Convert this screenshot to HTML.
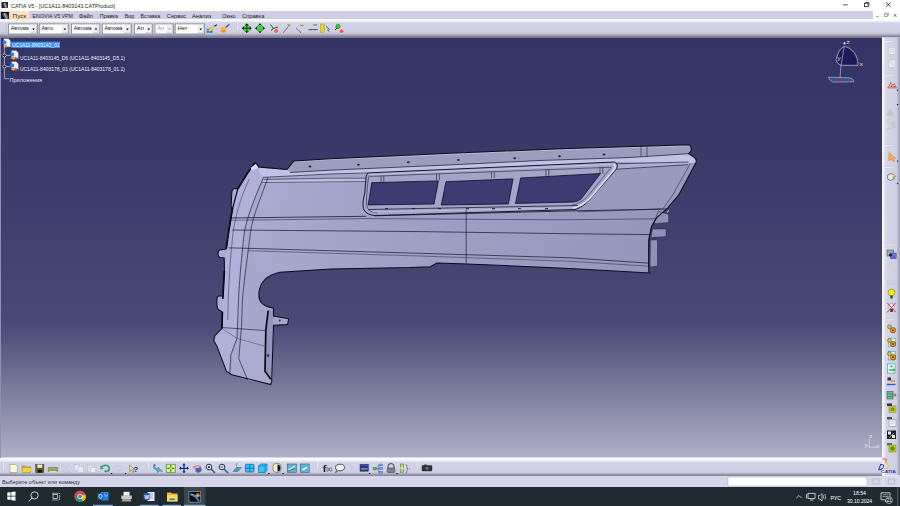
<!DOCTYPE html><html><head><meta charset="utf-8"><style>*{margin:0;padding:0}html,body{width:900px;height:506px;overflow:hidden;background:#fff}svg{display:block;font-family:"Liberation Sans",sans-serif}</style></head><body><svg width="900" height="506" viewBox="0 0 900 506"><defs><linearGradient id="vpg" x1="0" y1="0" x2="0" y2="1"><stop offset="0" stop-color="#333364"/><stop offset="0.35" stop-color="#3c3c6a"/><stop offset="0.686" stop-color="#4a4a76"/><stop offset="1" stop-color="#b0b0c8"/></linearGradient></defs><defs><linearGradient id="tbg" x1="0" y1="0" x2="0" y2="1"><stop offset="0" stop-color="#ffffff"/><stop offset="0.1" stop-color="#f4f4fa"/><stop offset="0.2" stop-color="#d2d2e8"/><stop offset="0.7" stop-color="#cfcfe4"/><stop offset="0.82" stop-color="#b8b8cc"/><stop offset="0.92" stop-color="#8a8a9a"/><stop offset="1" stop-color="#7a7a8a"/></linearGradient><linearGradient id="btg" x1="0" y1="0" x2="0" y2="1"><stop offset="0" stop-color="#ffffff"/><stop offset="0.18" stop-color="#f0f0f8"/><stop offset="0.26" stop-color="#d2d2e8"/><stop offset="0.8" stop-color="#cfcfe4"/><stop offset="0.88" stop-color="#a8a8bc"/><stop offset="1" stop-color="#80808f"/></linearGradient><linearGradient id="rtg" x1="0" y1="0" x2="1" y2="0"><stop offset="0" stop-color="#ffffff"/><stop offset="0.22" stop-color="#d6d6ea"/><stop offset="0.8" stop-color="#cfcfe4"/><stop offset="1" stop-color="#9a9aae"/></linearGradient></defs><rect x="0" y="0" width="900" height="11" fill="#ffffff" /><rect x="0" y="11" width="873" height="8.4" fill="#cecee4" /><rect x="873" y="11" width="27" height="8.4" fill="#ffffff" /><rect x="0" y="19.3" width="900" height="18.2" fill="url(#tbg)" /><rect x="0" y="37.5" width="882" height="420.5" fill="url(#vpg)" /><rect x="882" y="37.5" width="18" height="438" fill="url(#rtg)" /><rect x="0" y="457.5" width="882" height="18.5" fill="url(#btg)" /><rect x="0" y="476" width="900" height="11" fill="#d6d6ea" /><rect x="728" y="477.2" width="139" height="8.8" fill="#ffffff" /><rect x="0" y="487" width="900" height="19" fill="#1f2a31" /><g transform="translate(1.5,2.1) scale(0.8,0.725)"><rect x="0" y="0" width="8" height="8" fill="#0a0e16"/><path d="M1 3 L2.5 1.2 L5.5 8 L4 8z" fill="#2a5a90"/><path d="M2.5 1.2 L3.8 1 L6.6 7.6 L5.5 8z" fill="#c8d8d8"/><path d="M3.8 1 L5.5 1.2 L7.3 5.5 L6.6 7.6z" fill="#a06030"/></g><text x="11" y="7.6" textLength="104" lengthAdjust="spacingAndGlyphs" font-size="5.6" fill="#222" font-weight="normal" >CATIA V5 - [UC1A11-8403143.CATProduct]</text><rect x="842.8" y="4.5" width="5" height="0.8" fill="#333" /><rect x="864.5" y="3.3" width="3.6" height="3.4" fill="none" stroke="#222" stroke-width="0.8"/><path d="M865.5 3.2 V2.4 H869 V5.9 H868.2" fill="none" stroke="#222" stroke-width="0.7"/><path d="M886 2.4 L890.6 6.8 M890.6 2.4 L886 6.8" stroke="#222" stroke-width="0.8"/><g transform="translate(0.9,12) scale(1.0,0.875)"><rect x="0" y="0" width="8" height="8" fill="#0a0e16"/><path d="M1 3 L2.5 1.2 L5.5 8 L4 8z" fill="#2a5a90"/><path d="M2.5 1.2 L3.8 1 L6.6 7.6 L5.5 8z" fill="#c8d8d8"/><path d="M3.8 1 L5.5 1.2 L7.3 5.5 L6.6 7.6z" fill="#a06030"/></g><rect x="10.5" y="11" width="18.5" height="9.1" fill="#fbe3c0" /><text x="12.6" y="17.6" textLength="13.6" lengthAdjust="spacingAndGlyphs" font-size="6.2" fill="#222" font-weight="normal" >Пуск</text><text x="32.6" y="17.6" textLength="40.4" lengthAdjust="spacingAndGlyphs" font-size="6.2" fill="#222" font-weight="normal" >ENOVIA V5 VPM</text><text x="78.9" y="17.6" textLength="14" lengthAdjust="spacingAndGlyphs" font-size="6.2" fill="#222" font-weight="normal" >Файл</text><text x="99.8" y="17.6" textLength="18.2" lengthAdjust="spacingAndGlyphs" font-size="6.2" fill="#222" font-weight="normal" >Правка</text><text x="124.7" y="17.6" textLength="9.4" lengthAdjust="spacingAndGlyphs" font-size="6.2" fill="#222" font-weight="normal" >Вид</text><text x="140.6" y="17.6" textLength="19.6" lengthAdjust="spacingAndGlyphs" font-size="6.2" fill="#222" font-weight="normal" >Вставка</text><text x="166.8" y="17.6" textLength="19.4" lengthAdjust="spacingAndGlyphs" font-size="6.2" fill="#222" font-weight="normal" >Сервис</text><text x="192" y="17.6" textLength="19.2" lengthAdjust="spacingAndGlyphs" font-size="6.2" fill="#222" font-weight="normal" >Анализ</text><text x="222" y="17.6" textLength="13.6" lengthAdjust="spacingAndGlyphs" font-size="6.2" fill="#222" font-weight="normal" >Окно</text><text x="242" y="17.6" textLength="22.4" lengthAdjust="spacingAndGlyphs" font-size="6.2" fill="#222" font-weight="normal" >Справка</text><rect x="873.5" y="11" width="7.5" height="8" fill="#ffffff" /><rect x="882" y="11" width="8" height="8" fill="#ffffff" /><rect x="891" y="11" width="8.5" height="8" fill="#ffffff" /><rect x="876.2" y="16.3" width="2.2" height="0.7" fill="#555" /><rect x="884.5" y="14" width="3" height="2.6" fill="none" stroke="#666" stroke-width="0.6"/><path d="M885.3 13.9 V13 H888.5 V15.8" fill="none" stroke="#666" stroke-width="0.5"/><path d="M893.8 14 L896.4 16.8 M896.4 14 L893.8 16.8" stroke="#444" stroke-width="0.7"/><path d="M6 23.5 V33.5" stroke="#b8b8cc" stroke-width="0.8"/><rect x="8.6" y="23.9" width="28.799999999999997" height="10.100000000000001" fill="#fff" stroke="#8c8c98" stroke-width="0.9"/><rect x="30.2" y="24.9" width="6.4" height="8.100000000000001" fill="#f0f0f0"/><path d="M30.2 33 H36.6 V24.9" stroke="#b0b0b8" stroke-width="0.6" fill="none"/><path d="M32.2 28.6 h2.6 l-1.3 1.6z" fill="#000"/><text x="10.8" y="30.3" textLength="18" lengthAdjust="spacingAndGlyphs" font-size="5.6" fill="#111" font-weight="normal" >Автома</text><rect x="39.3" y="23.9" width="29.400000000000006" height="10.100000000000001" fill="#fff" stroke="#8c8c98" stroke-width="0.9"/><rect x="61.5" y="24.9" width="6.4" height="8.100000000000001" fill="#f0f0f0"/><path d="M61.5 33 H67.9 V24.9" stroke="#b0b0b8" stroke-width="0.6" fill="none"/><path d="M63.5 28.6 h2.6 l-1.3 1.6z" fill="#000"/><text x="41.5" y="30.3" textLength="11.6" lengthAdjust="spacingAndGlyphs" font-size="5.6" fill="#111" font-weight="normal" >Авто</text><rect x="71.5" y="23.9" width="28.400000000000006" height="10.100000000000001" fill="#fff" stroke="#8c8c98" stroke-width="0.9"/><rect x="92.7" y="24.9" width="6.4" height="8.100000000000001" fill="#f0f0f0"/><path d="M92.7 33 H99.10000000000001 V24.9" stroke="#b0b0b8" stroke-width="0.6" fill="none"/><path d="M94.7 28.6 h2.6 l-1.3 1.6z" fill="#000"/><text x="73.7" y="30.3" textLength="18" lengthAdjust="spacingAndGlyphs" font-size="5.6" fill="#111" font-weight="normal" >Автома</text><rect x="102.3" y="23.9" width="29.10000000000001" height="10.100000000000001" fill="#fff" stroke="#8c8c98" stroke-width="0.9"/><rect x="124.2" y="24.9" width="6.4" height="8.100000000000001" fill="#f0f0f0"/><path d="M124.2 33 H130.6 V24.9" stroke="#b0b0b8" stroke-width="0.6" fill="none"/><path d="M126.2 28.6 h2.6 l-1.3 1.6z" fill="#000"/><text x="104.5" y="30.3" textLength="18" lengthAdjust="spacingAndGlyphs" font-size="5.6" fill="#111" font-weight="normal" >Автома</text><rect x="134.6" y="23.9" width="18.0" height="10.100000000000001" fill="#fff" stroke="#8c8c98" stroke-width="0.9"/><rect x="145.4" y="24.9" width="6.4" height="8.100000000000001" fill="#f0f0f0"/><path d="M145.4 33 H151.79999999999998 V24.9" stroke="#b0b0b8" stroke-width="0.6" fill="none"/><path d="M147.4 28.6 h2.6 l-1.3 1.6z" fill="#000"/><text x="136.79999999999998" y="30.3" textLength="7" lengthAdjust="spacingAndGlyphs" font-size="5.6" fill="#111" font-weight="normal" >Ап</text><rect x="155" y="23.9" width="18.400000000000006" height="10.100000000000001" fill="#fff" stroke="#8c8c98" stroke-width="0.9"/><rect x="166.20000000000002" y="24.9" width="6.4" height="8.100000000000001" fill="#f0f0f0"/><path d="M166.20000000000002 33 H172.6 V24.9" stroke="#b0b0b8" stroke-width="0.6" fill="none"/><path d="M168.20000000000002 28.6 h2.6 l-1.3 1.6z" fill="#a0a0a0"/><text x="157.2" y="30.3" textLength="7" lengthAdjust="spacingAndGlyphs" font-size="5.6" fill="#999" font-weight="normal" >Ап</text><rect x="175.2" y="23.9" width="29.400000000000006" height="10.100000000000001" fill="#fff" stroke="#8c8c98" stroke-width="0.9"/><rect x="197.4" y="24.9" width="6.4" height="8.100000000000001" fill="#f0f0f0"/><path d="M197.4 33 H203.79999999999998 V24.9" stroke="#b0b0b8" stroke-width="0.6" fill="none"/><path d="M199.4 28.6 h2.6 l-1.3 1.6z" fill="#000"/><text x="177.39999999999998" y="30.3" textLength="10" lengthAdjust="spacingAndGlyphs" font-size="5.6" fill="#111" font-weight="normal" >Нет</text><path d="M206.6 28.8 h6 v1.6 h-6z M206.6 31 h6 v1.8 h-6z" fill="#2a7ad8"/><path d="M208 30.5 L213.5 25.5 L215 27 L209.8 31.8z" fill="#e8d850" stroke="#8a7a20" stroke-width="0.3"/><path d="M214 25.8 L216.8 24.3 L217.3 25 L215 26.8z" fill="#1a2a8a"/><circle cx="223.3" cy="29.8" r="2.9" fill="#f0c020"/><path d="M220.5 30.5 a2.9 2.9 0 0 0 5.6 0z" fill="#e07080" opacity="0.7"/><path d="M225.5 27.5 L229.5 24.2" stroke="#3050b0" stroke-width="1.2"/><path d="M228.3 23.6 l1.5 1.2" stroke="#e09050" stroke-width="0.9"/><path d="M237.4 22.5 V30" stroke="#fafafa" stroke-width="0.8"/><path d="M236.8 22.5 V30" stroke="#b0b0c4" stroke-width="0.4"/><path d="M244.60000000000002 24.4 h4.4 v1.6 h1.6 v4.4 h-1.6 v1.6 h-4.4 v-1.6 h-1.6 v-4.4 h1.6z" fill="#40d040"/><path d="M246.8 23.9 V32.5 M242.5 28.2 H251.10000000000002" stroke="#111" stroke-width="0.7"/><path d="M246.8 23.299999999999997 l-1.7 1.9 h3.4z M246.8 33.1 l-1.7 -1.9 h3.4z M241.9 28.2 l1.9 -1.7 v3.4z M251.70000000000002 28.2 l-1.9 -1.7 v3.4z" fill="#111"/><path d="M260 23.799999999999997 L264.4 28.2 L260 32.6 L255.6 28.2z" fill="#40d040" stroke="#0a3a0a" stroke-width="0.5"/><path d="M260 23.299999999999997 l-1.5 1.7 h3z M260 33.1 l-1.5 -1.7 h3z M255.1 28.2 l1.7 -1.5 v3z M264.9 28.2 l-1.7 -1.5 v3z" fill="#111"/><path d="M270.5 24.5 L273.5 28.5 L271 30.5 M273.5 28.5 L278 27" stroke="#204020" stroke-width="0.9" fill="none"/><path d="M271.2 29.5 l2 -1" stroke="#30c030" stroke-width="1"/><circle cx="276.2" cy="31" r="2.4" fill="#f06060" stroke="#fff" stroke-width="0.4"/><path d="M283.2 32.8 L288.4 26.5" stroke="#333" stroke-width="0.6"/><rect x="287.6" y="24.3" width="2.6" height="1.8" fill="#b0a030"/><path d="M296.2 28 L300.8 32.6" stroke="#333" stroke-width="0.6"/><path d="M300.8 32.6 l-1.3 -0.2 l1 -1z" fill="#333"/><rect x="300" y="24.8" width="3.6" height="1.3" fill="#a09a40"/><path d="M308.2 29.6 H318" stroke="#333" stroke-width="0.7"/><path d="M311 28.8 v1.6 M315 28.8 v1.6" stroke="#333" stroke-width="0.5"/><rect x="313.2" y="24.2" width="3.8" height="1.6" fill="#a09a40"/><rect x="320.6" y="24" width="3.8" height="8.6" fill="#e0d040" stroke="#a09820" stroke-width="0.4"/><path d="M326 26 L329.5 29.5 L327.8 29.8 L328.8 31.8" stroke="#555" stroke-width="0.7" fill="#bbb"/><path d="M335.2 29.8 L337 28" stroke="#111" stroke-width="1"/><circle cx="338" cy="26.4" r="2.2" fill="#30d030" stroke="#0a500a" stroke-width="0.4"/><circle cx="341.6" cy="31.2" r="2.3" fill="#f06060" stroke="#fff" stroke-width="0.4"/><rect x="0" y="37.5" width="1" height="420.5" fill="#9090b0" /><path d="M3.9 38.8 h4.5 l2 2 v6 h-6.5z" fill="#f4f4ff" stroke="#c8d0f0" stroke-width="0.3"/><path d="M2.4 41.3 l2 -1 l2 1 v2.2 l-2 1 l-2 -1z" fill="#3080e0"/><circle cx="5.6" cy="46.0" r="1.6" fill="#d8a040"/><rect x="11.2" y="41.7" width="48.8" height="6.2" fill="#3d8ee8" /><text x="12" y="47.2" textLength="47.5" lengthAdjust="spacingAndGlyphs" font-size="5.8" fill="#ffffff" font-weight="normal" >UC1A11-8403143_01</text><path d="M4.4 46.5 V78.7 H9" stroke="#e8e8f4" stroke-width="0.6" fill="none"/><path d="M4.4 55.5 H10" stroke="#e8e8f4" stroke-width="0.6"/><circle cx="4.4" cy="55.5" r="1.9" fill="#c8c8d8"/><path d="M2.9 55.5 h3 M4.4 54.0 v3" stroke="#000" stroke-width="0.8"/><path d="M11.7 50.7 h4.5 l2 2 v6 h-6.5z" fill="#f4f4ff" stroke="#c8d0f0" stroke-width="0.3"/><path d="M10.2 53.2 l2 -1 l2 1 v2.2 l-2 1 l-2 -1z" fill="#3080e0"/><circle cx="13.399999999999999" cy="57.900000000000006" r="1.6" fill="#d8a040"/><path d="M15.2 56.7 l3.2 1.8 l-3.2 1.4z" fill="#e03030"/><path d="M4.4 66.6 H10" stroke="#e8e8f4" stroke-width="0.6"/><circle cx="4.4" cy="66.6" r="1.9" fill="#c8c8d8"/><path d="M2.9 66.6 h3 M4.4 65.1 v3" stroke="#000" stroke-width="0.8"/><path d="M11.7 61.8 h4.5 l2 2 v6 h-6.5z" fill="#f4f4ff" stroke="#c8d0f0" stroke-width="0.3"/><path d="M10.2 64.3 l2 -1 l2 1 v2.2 l-2 1 l-2 -1z" fill="#3080e0"/><circle cx="13.399999999999999" cy="69.0" r="1.6" fill="#d8a040"/><path d="M15.2 67.8 l3.2 1.8 l-3.2 1.4z" fill="#e03030"/><text x="19.9" y="59.8" textLength="105" lengthAdjust="spacingAndGlyphs" font-size="6.2" fill="#f0f0f8" font-weight="normal" >UC1A11-8403145_D6 (UC1A11-8403145_D5.1)</text><text x="19.9" y="70.9" textLength="105" lengthAdjust="spacingAndGlyphs" font-size="6.2" fill="#f0f0f8" font-weight="normal" >UC1A11-8403178_01 (UC1A11-8403178_01.1)</text><text x="9.5" y="82.3" textLength="32.5" lengthAdjust="spacingAndGlyphs" font-size="5.6" fill="#e8e8f4" font-weight="normal" >Приложения</text><path d="M844.3 46.5 C852 47.5 858 55 858 65.3 L841 65.3 C838 64 836 62 836.3 59.5 C837.5 53 840.5 47.8 844.3 46.5z" fill="#1c1c58" stroke="#c8c8f0" stroke-width="0.7"/><path d="M844.3 46.5 L841 65.3 L840 78.5" stroke="#c8c8f0" stroke-width="0.6" fill="none"/><circle cx="844.5" cy="43.3" r="1.1" fill="#f0f0ff"/><path d="M828.5 77.2 L849 77.8 C852 78.2 854.2 80 853.8 81.8 L832.5 82 C830.5 81 829 79 828.5 77.2z" fill="#2a5a80" stroke="#c8c8f0" stroke-width="0.6"/><rect x="838.3" y="78.6" width="2.8" height="2.6" fill="#e01020" /><text x="846.2" y="43.8" textLength="3.6" lengthAdjust="spacingAndGlyphs" font-size="5.6" fill="#e8d870" font-weight="normal" >z</text><text x="859.6" y="66" textLength="3.6" lengthAdjust="spacingAndGlyphs" font-size="5.4" fill="#e8d870" font-weight="normal" >x</text><text x="837.2" y="60" textLength="3.4" lengthAdjust="spacingAndGlyphs" font-size="5.4" fill="#e8d870" font-weight="normal" >y</text><defs><linearGradient id="bgu" gradientUnits="userSpaceOnUse" x1="0" y1="37.5" x2="0" y2="458"><stop offset="0" stop-color="#333364"/><stop offset="0.35" stop-color="#3c3c6a"/><stop offset="0.686" stop-color="#4a4a76"/><stop offset="1" stop-color="#b0b0c8"/></linearGradient><linearGradient id="faceg" gradientUnits="userSpaceOnUse" x1="240" y1="170" x2="660" y2="270"><stop offset="0" stop-color="#acacd2"/><stop offset="0.4" stop-color="#a0a0c6"/><stop offset="1" stop-color="#9696bc"/></linearGradient></defs><path d="M254.7 163 C256.5 163.5 258 165 258.5 167 L287 169.5 L294 161 L330 158.7 L450 153.3 L560 148.8 L641 146.3 L689.4 144.8 C691 146 691.5 149 691 151 L688.5 153.7 L694.5 157.6 C696 159 696.5 161 696 162.5 L678.6 195.2 L666.7 209 L656.6 217.8 L651.5 226.4 L648.7 240.2 L648.7 271.2 L649.7 273 L570 268.4 L467 264 L437 263.1 L430 266.7 L410 267.6 L331 268.9 L280 272.2 C268 274.5 259.5 282 258.9 293 C258.4 301 261 306 273.5 308.2 L273.5 316 L288.6 318.8 L287.6 324.5 L273.5 325.2 L271.7 381.9 L270.8 384.5 L231.7 374.7 L226.4 371.2 L216.6 345.4 L213.9 340.9 L214.8 335.6 L221.9 328.5 L222.4 312 L219 310 C216.5 309 216 297 218.5 296 L222.8 296 L224.4 271 L224.2 258 L220 257.5 C217.5 257 217.5 250.5 219.5 250 L226 249 L228.9 230 L232.4 209 C231 208.5 231 206 231.2 204 L231.8 193 C232 190 233 188.8 234.5 188.6 L237.8 188.9 L247.6 172.9 Z" fill="url(#faceg)"/><path d="M658 211 L668.6 214.5 L668.6 222.5 L654 223.5z M652.5 229 L666 229 L666 236.5 L651 237.5z M650.5 240 L657.5 240 L657.5 266 L650 267z" fill="#9090b6" stroke="#24243e" stroke-width="0.45"/><path d="M666.8 211.5 L669.5 209.6 L667.6 213.5z" fill="#a8a8cc"/><path d="M254.7 163 C256.5 163.5 258 165 258.5 167 L287 169.5 L294 161 L330 158.7 L450 153.3 L560 148.8 L641 146.3 L689.4 144.8 C691 146 691.5 149 691 151 L688.5 153.7 L694.5 157.6 C696 159 696.5 161 696 162.5 L678.6 195.2 L666.7 209 L656.6 217.8 L651.5 226.4 L648.7 240.2 L648.7 271.2 L649.7 273 L570 268.4 L467 264 L437 263.1 L430 266.7 L410 267.6 L331 268.9 L280 272.2 C268 274.5 259.5 282 258.9 293 C258.4 301 261 306 273.5 308.2 L273.5 316 L288.6 318.8 L287.6 324.5 L273.5 325.2 L271.7 381.9 L270.8 384.5 L231.7 374.7 L226.4 371.2 L216.6 345.4 L213.9 340.9 L214.8 335.6 L221.9 328.5 L222.4 312 L219 310 C216.5 309 216 297 218.5 296 L222.8 296 L224.4 271 L224.2 258 L220 257.5 C217.5 257 217.5 250.5 219.5 250 L226 249 L228.9 230 L232.4 209 C231 208.5 231 206 231.2 204 L231.8 193 C232 190 233 188.8 234.5 188.6 L237.8 188.9 L247.6 172.9 Z" fill="url(#faceg)" clip-path="none" opacity="0"/><path d="M247.6 172.9 L254.7 163 C256.5 163.5 258 165 258.5 167 L263.6 177.3 C256 195 247 215 244.4 232 L238.8 300 L237 338.3 L230.8 355.2 L229.9 373 L226.4 371.2 L216.6 345.4 L213.9 340.9 L214.8 335.6 L221.9 328.5 L222.8 299 L224.4 271 L228.9 230 L232.4 207.6 L237.8 188.9z" fill="#b0b0d8"/><path d="M263.6 177.3 L268 177.3 C262 195 253 215 250.5 232 C247 260 243 290 242.4 300 L241.5 326.7 L238.8 300 C239 290 241 260 244.4 232 C247 215 256 195 263.6 177.3z" fill="#a8a8d0"/><path d="M250.5 232 C247 260 243 290 242.4 300 L241.5 326.7 L273.5 331 L273.5 316 L273.5 308.2 C261 306 258.4 301 258.9 293 C259.5 282 268 274.5 280 272.2 L256 272 z" fill="#a6a6cc"/><path d="M241.5 326.7 L273.5 331 L271.7 381.9 L247.7 380 L238.8 358.7z" fill="#acacd2"/><path d="M287 169.5 L294 161 L330 158.7 L450 153.3 L560 148.8 L641 146.3 L689.4 144.8 C691 146 691.5 149 691 151 L688.5 153.7 L630 157.5 L540 160.5 L450 164.9 L330 170.2 L290 172.5z" fill="#9c9cbe"/><path d="M294 161.8 L330 159.6 L450 154.3 L560 149.8 L641 147.3 L689 145.8" stroke="#c8c8e4" stroke-width="0.6" fill="none"/><path d="M258.5 167 L287 169.5 L290 172.5 L330 170.2 L450 164.9 L540 160.5 L630 157.5 L688.5 153.7 L694.5 157.6 C696 159 696.5 161 696 162.5 L690 163.5 L614 162 L368.2 172.9 L330 174 L263.6 177.3 L259 172z" fill="#c2c2e6"/><path d="M263.6 177.3 L330 174 L368 173.2 L366.5 178 L330 178.2 L264 179.5z" fill="#a6a6c8"/><path d="M264 179.5 L330 178.2 L366.3 178.2 L366 181.5 L262 182.5z" fill="#bcbce0"/><path d="M616 165 L690 163.5 L696 162.5 L678.6 195.2 L666.7 209 L600 211 L577.8 206.5 L593.6 195.2z" fill="#9a9abe"/><path d="M690 164 L672.6 195.2 L662.8 209" stroke="#16162e" stroke-width="0.5" fill="none"/><path d="M616 163.8 L688.4 162 L688 164.7 L616 169.2z" fill="#aeaed2"/><path d="M616 163.8 L688.4 162 M616.5 169.2 L688 164.7" stroke="#16162e" stroke-width="0.65" fill="none"/><path d="M368.2 172.9 L614.3 162 C617.5 163 618 166 616.5 169 L593.6 195.2 C588 202 583 207 575 209.5 L374.4 215.6 C370 215 366 213.5 364 210 C362.5 207 362.7 200 364.7 193.3 L366 178 C366.3 175 367 173.5 368.2 172.9z" fill="#a4a4c8" stroke="#0a0a18" stroke-width="0.9"/><path d="M370 176.4 L611 167.3" stroke="#1e1e3a" stroke-width="0.6"/><path d="M370 174.6 L612 164.3" stroke="#d4d4f0" stroke-width="0.7"/><path d="M613.5 164 C615.5 165.5 615 168 613.8 170 L591.5 196.5 C586 203 581 206.5 573 208" stroke="#d8d8f8" stroke-width="1.8" fill="none"/><path d="M611.5 166.8 L589.5 194 C585 199.5 580 203.5 572 205.2" stroke="#222240" stroke-width="0.55" fill="none"/><path d="M369.5 175.5 C368 178 367.5 185 366.8 193.5 C366 202 366.5 207 368.5 209.5 C371 212 374 213 378 213" stroke="#1e1e3a" stroke-width="0.6" fill="none"/><path d="M368 209.5 L578 205.5" stroke="#1e1e3a" stroke-width="0.8"/><path d="M372 212 L575 207.8" stroke="#d0d0ee" stroke-width="0.6"/><path d="M371.8 182.7 L438.4 180.9 L434 204 L368.2 204.9z" fill="#3c3c72" stroke="#0c0c22" stroke-width="0.8"/><path d="M446 181.7 L513 178.9 L508.4 203.9 L441.3 205z" fill="#3c3c72" stroke="#0c0c22" stroke-width="0.8"/><path d="M520.7 178 L600.5 173.5 L581 199 C578 201 576 202 572 202.1 L515.5 203.4z" fill="#3c3c72" stroke="#0c0c22" stroke-width="0.8"/><path d="M381 176 v6.5 M383.8 175.9 v6.5" stroke="#16162e" stroke-width="0.6"/><path d="M436.5 173.8 v6.5 M439.3 173.70000000000002 v6.5" stroke="#16162e" stroke-width="0.6"/><path d="M491.5 171.6 v6.5 M494.3 171.5 v6.5" stroke="#16162e" stroke-width="0.6"/><path d="M546 169.4 v6.5 M548.8 169.3 v6.5" stroke="#16162e" stroke-width="0.6"/><path d="M600 167.2 v6.5 M602.8 167.1 v6.5" stroke="#16162e" stroke-width="0.6"/><path d="M385 208.7 h3" stroke="#16162e" stroke-width="1"/><path d="M412 208.7 h3" stroke="#16162e" stroke-width="1"/><path d="M438 208.7 h3" stroke="#16162e" stroke-width="1"/><path d="M466 208.7 h3" stroke="#16162e" stroke-width="1"/><path d="M492 208.7 h3" stroke="#16162e" stroke-width="1"/><path d="M518 208.7 h3" stroke="#16162e" stroke-width="1"/><path d="M545 208.7 h3" stroke="#16162e" stroke-width="1"/><path d="M290 172.5 L330 170.2 L450 164.9 L540 160.5 L630 157.5 L688.5 153.7" stroke="#16162e" stroke-width="0.7" fill="none"/><path d="M263.6 177.3 L330 174 L368.2 172.9" stroke="#16162e" stroke-width="0.6" fill="none"/><path d="M264 179.5 L330 178.2 L366.3 178.2" stroke="#16162e" stroke-width="0.55" fill="none"/><path d="M262 182.5 L366 181.5" stroke="#16162e" stroke-width="0.5" fill="none"/><path d="M641 146.4 V157 M647 146.2 V156.8" stroke="#16162e" stroke-width="0.55"/><path d="M258.5 167 L287 169.5" stroke="#16162e" stroke-width="0.5"/><ellipse cx="310" cy="166.5" rx="1.4" ry="1" fill="#22223e"/><ellipse cx="358.4" cy="164.8" rx="1.4" ry="1" fill="#22223e"/><ellipse cx="408.2" cy="162.3" rx="1.4" ry="1" fill="#22223e"/><ellipse cx="458.3" cy="160" rx="1.4" ry="1" fill="#22223e"/><ellipse cx="514.7" cy="158.2" rx="1.4" ry="1" fill="#22223e"/><ellipse cx="559.5" cy="156.3" rx="1.4" ry="1" fill="#22223e"/><ellipse cx="604" cy="154.5" rx="1.4" ry="1" fill="#22223e"/><path d="M228.9 218 L366 216.3 M374.4 215.8 L575 210.8 L666.7 209" stroke="#16162e" stroke-width="0.8" fill="none"/><path d="M229.5 220.3 L366 218.6 L560 219.8 L656 218.8" stroke="#16162e" stroke-width="0.5" fill="none"/><path d="M232.2 230 L420 231.6 L560 233.6 L649 234.6" stroke="#16162e" stroke-width="0.7" fill="none"/><path d="M228.9 247.8 L420 253.3 L570 257.8 L649 263.2" stroke="#16162e" stroke-width="0.7" fill="none"/><path d="M247.8 250.7 L420 256 L570 261.3 L649 266.2" stroke="#30304e" stroke-width="0.55" fill="none"/><path d="M466.2 209.8 V263.5" stroke="#16162e" stroke-width="0.65"/><path d="M577.8 211.9 L662.8 208.9" stroke="#16162e" stroke-width="0.5"/><path d="M656.6 217.8 L651.5 226.4 L648.7 240.2" stroke="#16162e" stroke-width="0.5" fill="none"/><path d="M263.6 177.3 C256 195 247.5 215 244.4 232 C241 260 238.8 290 238.5 300 L237 338.3 L230.8 355.2 L229.9 373" stroke="#16162e" stroke-width="0.65" fill="none"/><path d="M268 177.3 C262 195 253 215 250.5 232 C247 260 243 290 242.4 300 L241.5 326.7 L238.8 358.7 L247.7 380" stroke="#16162e" stroke-width="0.65" fill="none"/><path d="M249.3 179 C243 192 237 210 233.3 230 C230 260 228 290 227.8 320" stroke="#2a2a48" stroke-width="0.5" fill="none"/><path d="M222.8 327.6 L273.5 331.1" stroke="#16162e" stroke-width="0.65"/><path d="M221.9 328.5 L237 338.3 L264 346" stroke="#2a2a48" stroke-width="0.4" fill="none"/><path d="M237.8 189 L232.4 209" stroke="#0a0a18" stroke-width="1.2"/><path d="M268.2 310.5 L273.4 310.5 L272.6 378.5 L270.8 379.2 L264.6 371.2 L265.5 330z" fill="#9494bc"/><path d="M268.2 310.7 L265.8 330 L265 371.2 L270.8 379.2" stroke="#0a0a18" stroke-width="1.7" fill="none"/><ellipse cx="268" cy="355.5" rx="1.2" ry="1.6" fill="#303050"/><circle cx="279.7" cy="320.5" r="1" fill="#303050"/><path d="M254.7 163 C256.5 163.5 258 165 258.5 167 L287 169.5 L294 161 L330 158.7 L450 153.3 L560 148.8 L641 146.3 L689.4 144.8 C691 146 691.5 149 691 151 L688.5 153.7 L694.5 157.6 C696 159 696.5 161 696 162.5 L678.6 195.2 L666.7 209 L656.6 217.8 L651.5 226.4 L648.7 240.2 L648.7 271.2 L649.7 273 L570 268.4 L467 264 L437 263.1 L430 266.7 L410 267.6 L331 268.9 L280 272.2 C268 274.5 259.5 282 258.9 293 C258.4 301 261 306 273.5 308.2 L273.5 316 L288.6 318.8 L287.6 324.5 L273.5 325.2 L271.7 381.9 L270.8 384.5 L231.7 374.7 L226.4 371.2 L216.6 345.4 L213.9 340.9 L214.8 335.6 L221.9 328.5 L222.4 312 L219 310 C216.5 309 216 297 218.5 296 L222.8 296 L224.4 271 L224.2 258 L220 257.5 C217.5 257 217.5 250.5 219.5 250 L226 249 L228.9 230 L232.4 209 C231 208.5 231 206 231.2 204 L231.8 193 C232 190 233 188.8 234.5 188.6 L237.8 188.9 L247.6 172.9 Z" fill="none" stroke="#0a0a18" stroke-width="1.05"/><path d="M254.5 163.5 L247.6 172.9 L237.8 188.9 M232.6 207.6 L228.9 230 L226.3 248.6 M224.4 271 L222.8 299 M222.4 312 L221.9 328.5" fill="none" stroke="#0a0a18" stroke-width="1.7"/><path d="M255 164.5 C257 165 257.8 166.5 258 168 L252 170.5 L250.5 168z" fill="#d8d8f4"/><path d="M3.6 461.5 V469" stroke="#fafafa" stroke-width="0.8"/><path d="M3 461.5 V469" stroke="#b8b8cc" stroke-width="0.4"/><path d="M10 464.4 h5.5 l2 2 v6.2 h-7.5z" fill="#fafad0" stroke="#808080" stroke-width="0.5"/><path d="M22.2 466 h3 l1 1 h4.5 v5.3 h-8.5z" fill="#d8b030" stroke="#806010" stroke-width="0.5"/><path d="M23 468 h8.5 l-1.2 4.3 h-8.3z" fill="#f0d040"/><rect x="35.6" y="464.4" width="8.3" height="8.2" fill="#606020" stroke="#303010" stroke-width="0.4"/><rect x="37.3" y="464.6" width="5" height="3.2" fill="#e8e8e8"/><rect x="37.8" y="469.8" width="4" height="2.8" fill="#101010"/><path d="M50 465 h5 l1 2 h-6z" fill="#c0d0e0"/><path d="M48.2 467.5 h9.5 v3.8 h-9.5z" fill="#a0a060" stroke="#505030" stroke-width="0.4"/><rect x="49.5" y="471" width="7" height="1.5" fill="#e0e0c0"/><path d="M63 464.5 L69 471.5 M69 464.5 L63 471.5" stroke="#c8c8d4" stroke-width="1"/><circle cx="63.5" cy="471.8" r="1.2" fill="none" stroke="#c0c0cc" stroke-width="0.6"/><circle cx="68.5" cy="471.8" r="1.2" fill="none" stroke="#c0c0cc" stroke-width="0.6"/><rect x="74.5" y="464.5" width="5" height="6" fill="#e8e8f0" stroke="#c0c0cc" stroke-width="0.6"/><rect x="78" y="466.5" width="5.5" height="6" fill="#e8e8f0" stroke="#c0c0cc" stroke-width="0.6"/><rect x="87.5" y="465" width="6" height="7" fill="#e0e0ea" stroke="#c0c0cc" stroke-width="0.6"/><rect x="90.5" y="467.5" width="5" height="5" fill="#f0f0f4" stroke="#c0c0cc" stroke-width="0.6"/><path d="M101.5 467 C104 464 109 465 109.3 468.5 C109.5 471 106.5 472 104.5 471" stroke="#30a070" stroke-width="1.6" fill="none"/><path d="M100.3 465.5 l0.2 4 l3.5 -0.8z" fill="#30a070"/><path d="M110.5 473.0 h2 l-1 1.2z" fill="#000"/><path d="M115 467 C117 465 121 465 122.5 468 M118 471 l4 -2" stroke="#c8c8d4" stroke-width="1.2" fill="none"/><path d="M124.5 473.0 h2 l-1 1.2z" fill="#000"/><path d="M129.5 465 l0 6.5 l1.8 -1.5 l1.5 2.5 l1 -0.5 l-1.3 -2.4 h2.2z" fill="#f0e080" stroke="#404040" stroke-width="0.4"/><text x="133.3" y="471.8" textLength="5" lengthAdjust="spacingAndGlyphs" font-size="8" fill="#1030a0" font-weight="bold" >?</text><path d="M148 461.5 V469" stroke="#fafafa" stroke-width="0.8"/><path d="M147.4 461.5 V469" stroke="#b8b8cc" stroke-width="0.4"/><path d="M153.5 466 l3 2.5 l2 -1 l4 4 l-3 -0.5 l-2 1.5 l-1 -2.5 l-3 -2z" fill="#50b0d0" stroke="#206080" stroke-width="0.4"/><circle cx="154.5" cy="465.3" r="1.1" fill="#3070a0"/><rect x="166.3" y="464.3" width="9" height="8" fill="#e8f0a0" stroke="#40a040" stroke-width="0.8"/><path d="M170.8 465.2 v6.2 M167.3 468.3 h7" stroke="#202020" stroke-width="0.9"/><circle cx="170.8" cy="468.3" r="1.4" fill="#e0d020"/><path d="M184 463.8 V472.8 M179.6 468.3 H188.4" stroke="#103080" stroke-width="1.2"/><path d="M184 463.3 l-1.8 2 h3.6z M184 473.3 l-1.8 -2 h3.6z M179 468.3 l2 -1.8 v3.6z M189 468.3 l-2 -1.8 v3.6z" fill="#103080"/><circle cx="198.5" cy="469.5" r="3" fill="#2070d0"/><path d="M193 467 l4.5 -1.5 l3 0.8 l-1 2 l-4.5 0.3z" fill="#f0b0a0" stroke="#803030" stroke-width="0.4"/><path d="M195 471 a4 4 0 0 0 6.5 -1" stroke="#e04040" stroke-width="0.6" fill="none"/><circle cx="209" cy="467" r="2.8" fill="#e8f0ff" stroke="#203050" stroke-width="1"/><path d="M211 469 l4 4" stroke="#2060a0" stroke-width="1.6"/><circle cx="209" cy="467" r="0.9" fill="#000"/><circle cx="222" cy="467" r="2.8" fill="#e8f0ff" stroke="#203050" stroke-width="1"/><path d="M224 469 l4 4" stroke="#2060a0" stroke-width="1.6"/><path d="M220.8 467 h2.4" stroke="#000" stroke-width="0.8"/><path d="M233 471.5 l3.5 -4 h5 l-3.5 4z" fill="#40a0b0" stroke="#205060" stroke-width="0.4"/><path d="M236.6 466.8 V463.5" stroke="#b080c0" stroke-width="0.8"/><path d="M236.6 463 l-1.3 1.5 h2.6z" fill="#b080c0"/><rect x="245.4" y="464.3" width="8.6" height="7.8" rx="1" fill="#20c8f0" stroke="#2040a0" stroke-width="0.6"/><path d="M249.7 464.3 v7.8 M245.4 468.2 h8.6" stroke="#2040a0" stroke-width="0.6"/><path d="M258.5 466 l2 -2 h6.5 v6.5 l-2 2 h-6.5z" fill="#30c8f8" stroke="#2050b0" stroke-width="0.6"/><path d="M258.5 466 h6.5 v6.5 M265 466 l2 -2" stroke="#2050b0" stroke-width="0.5" fill="none"/><path d="M267.8 473.0 h2 l-1 1.2z" fill="#000"/><rect x="273" y="463.5" width="8" height="8.8" rx="3" fill="#f0f0d0" stroke="#707040" stroke-width="0.7"/><path d="M277.5 464.5 a3 3.5 0 0 1 0 7z" fill="#101030"/><path d="M282 473.0 h2 l-1 1.2z" fill="#000"/><rect x="287.3" y="464" width="9" height="8.3" fill="#60b0e0" stroke="#404060" stroke-width="0.5"/><path d="M288.5 470 l6.5 -4" stroke="#f0f080" stroke-width="1.4"/><path d="M288 471 l7 -2.5" stroke="#206090" stroke-width="0.6"/><rect x="300.2" y="464" width="9" height="8.3" fill="#50b8e8" stroke="#404060" stroke-width="0.5"/><path d="M302 470 l5 -2.5" stroke="#f8f8b0" stroke-width="1.4"/><path d="M317 461.5 V469" stroke="#fafafa" stroke-width="0.8"/><path d="M316.4 461.5 V469" stroke="#b8b8cc" stroke-width="0.4"/><text x="322.5" y="471.5" textLength="4" lengthAdjust="spacingAndGlyphs" font-size="8.5" fill="#000" font-weight="normal" >f</text><text x="326.2" y="471.2" textLength="5.8" lengthAdjust="spacingAndGlyphs" font-size="4.5" fill="#000" font-weight="normal" >(x)</text><ellipse cx="340" cy="467.5" rx="4.5" ry="3.3" fill="#f0f0f0" stroke="#202020" stroke-width="0.7"/><path d="M337 470 l-1.5 2.5 l3 -1.8" fill="#f0f0f0" stroke="#202020" stroke-width="0.6"/><circle cx="351.6" cy="467.5" r="1.2" fill="none" stroke="#c0c0cc" stroke-width="0.6"/><rect x="360" y="464.2" width="8.4" height="7" fill="#303858" stroke="#2030a0" stroke-width="0.5"/><rect x="360.5" y="464.6" width="7.5" height="1.5" fill="#3050d0"/><rect x="361" y="468" width="6.5" height="1.6" fill="#8090a0"/><path d="M368.5 473.0 h2 l-1 1.2z" fill="#000"/><rect x="373.2" y="467.5" width="3" height="2.5" fill="#40c040" stroke="#206020" stroke-width="0.3"/><path d="M376.2 468.7 h2 M378.2 465 v7.3 M378.2 465 h1.5 M378.2 468.7 h1.5 M378.2 472.3 h1.5" stroke="#404060" stroke-width="0.5" fill="none"/><rect x="379.7" y="464" width="3" height="2" fill="#80a0f0" stroke="#2040c0" stroke-width="0.3"/><rect x="379.7" y="467.7" width="3" height="2" fill="#80a0f0" stroke="#2040c0" stroke-width="0.3"/><rect x="379.7" y="471.3" width="3" height="2" fill="#80a0f0" stroke="#2040c0" stroke-width="0.3"/><path d="M388 468 v-1.5 a3 3 0 0 1 6 0 v1.5" stroke="#404040" stroke-width="1" fill="none"/><rect x="387.2" y="468" width="7.6" height="4.5" rx="1" fill="#808080" stroke="#303030" stroke-width="0.5"/><path d="M396 473.0 h2 l-1 1.2z" fill="#000"/><rect x="400.3" y="464" width="3.5" height="8.5" fill="#a0d0a0" stroke="#406040" stroke-width="0.4"/><rect x="400.3" y="467" width="3.5" height="2.4" fill="#e0e060"/><path d="M405.5 464.5 q1.5 0 1.5 2 v1.8 l1 0.5 l-1 0.5 v1.8 q0 2 -1.5 2" stroke="#404060" stroke-width="0.5" fill="none"/><path d="M409 468.8 h1" stroke="#404060" stroke-width="0.5"/><path d="M417 461.5 V469" stroke="#fafafa" stroke-width="0.8"/><path d="M416.4 461.5 V469" stroke="#b8b8cc" stroke-width="0.4"/><rect x="422" y="465.5" width="10" height="5.5" rx="1" fill="#303038" stroke="#101010" stroke-width="0.4"/><rect x="424" y="464.6" width="3" height="1.2" fill="#303038"/><circle cx="427" cy="468.3" r="1.5" fill="#707080"/><text x="2" y="483.8" textLength="78" lengthAdjust="spacingAndGlyphs" font-size="5.9" fill="#333" font-weight="normal" >Выберите объект или команду</text><rect x="728" y="477" width="139" height="9" fill="#ffffff" stroke="#a8a8b8" stroke-width="0.5"/><rect x="869" y="477" width="13.5" height="9.5" fill="#d4d4e4" stroke="#e8e8f4" stroke-width="0.5"/><rect x="884" y="477" width="14.5" height="9.5" fill="#d4d4e4" stroke="#e8e8f4" stroke-width="0.5"/><rect x="873" y="479" width="6" height="5" fill="none" stroke="#b0b0c0" stroke-width="0.6"/><rect x="888.5" y="479" width="6" height="5" fill="none" stroke="#b0b0c0" stroke-width="0.6"/><path d="M7.3 492.6 l3.3 -0.4 v3.6 h-3.3z M11.3 492.1 l4.2 -0.6 v4.3 h-4.2z M7.3 496.5 h3.3 v3.5 l-3.3 -0.4z M11.3 496.5 h4.2 v4.2 l-4.2 -0.5z" fill="#ffffff"/><circle cx="34.6" cy="495.4" r="3.6" fill="none" stroke="#f0f0f0" stroke-width="0.8"/><path d="M32 498 L28.8 501.4" stroke="#f0f0f0" stroke-width="0.9"/><rect x="53" y="494.6" width="4.6" height="4" fill="none" stroke="#e8e8e8" stroke-width="0.7"/><path d="M52 493.3 h6.5 M52 500 h6.5 M59.6 495 v5" stroke="#e8e8e8" stroke-width="0.6"/><circle cx="59.6" cy="493.6" r="0.5" fill="#e8e8e8"/><circle cx="80" cy="496.3" r="5.7" fill="#db4437"/><path d="M80 496.3 L74.8 498.7 A5.7 5.7 0 0 0 82.9 501.2z" fill="#0f9d58"/><path d="M80 496.3 L82.9 501.2 A5.7 5.7 0 0 0 85.5 494.5z" fill="#f4c20d"/><circle cx="80" cy="496.3" r="2.6" fill="#fff"/><circle cx="80" cy="496.3" r="2" fill="#4285f4"/><rect x="101" y="492" width="7.5" height="8.5" fill="#2880d8"/><rect x="97.5" y="493.2" width="6" height="6.2" fill="#0a64c0"/><ellipse cx="100.5" cy="496.3" rx="1.6" ry="2" fill="none" stroke="#fff" stroke-width="0.8"/><path d="M104.2 494.5 l2 1.8 l2 -1.8" stroke="#fff" stroke-width="0.5" fill="none"/><rect x="93" y="504.8" width="20" height="1.2" fill="#8ab0d8" /><path d="M123.5 491.8 h6 v4 h-6z" fill="#f0f0f0"/><path d="M121.3 495.5 h10.5 v3.5 h-10.5z" fill="#c8c8c8"/><path d="M122.5 499 h8 l1 2.5 h-10z" fill="#a0a0a0"/><rect x="147.5" y="492" width="7" height="9" fill="#e8eef8"/><path d="M149 494 h4 M149 496 h4 M149 498 h4" stroke="#4070c0" stroke-width="0.6"/><rect x="143.5" y="493" width="6" height="7" fill="#2b579a"/><text x="144.4" y="498.8" textLength="4.5" lengthAdjust="spacingAndGlyphs" font-size="5" fill="#fff" font-weight="bold" >W</text><rect x="140" y="504.8" width="18.5" height="1.2" fill="#8ab0d8" /><path d="M167 492.5 h4 l1 1 h5.5 v8 h-10.5z" fill="#e8b830"/><rect x="167" y="495" width="10.5" height="6.3" fill="#f8d860"/><rect x="169.5" y="498.5" width="5.5" height="1.5" fill="#3080c0"/><rect x="162.5" y="504.8" width="18.5" height="1.2" fill="#8ab0d8" /><rect x="184" y="487" width="21.5" height="19" fill="#3a454c" /><rect x="189" y="491.6" width="11.6" height="10.5" fill="#080c14" stroke="#c8c8c8" stroke-width="0.5"/><path d="M190.5 494.5 Q196 495.5 199 501.5" stroke="#3a80d0" stroke-width="1.8" fill="none"/><path d="M190.5 494 Q195 494.5 197.5 497" stroke="#b0d8f8" stroke-width="0.6" fill="none"/><circle cx="197.8" cy="495.2" r="2.3" fill="#c87030" opacity="0.9"/><circle cx="197.6" cy="495.6" r="0.9" fill="#f8e8c0"/><rect x="184" y="504.8" width="21.5" height="1.2" fill="#8ab0d8" /><path d="M796.3 498.2 L799 495.5 L801.7 498.2" stroke="#fff" stroke-width="0.7" fill="none"/><rect x="808" y="493.3" width="7" height="5.3" fill="none" stroke="#fff" stroke-width="0.7"/><path d="M810 500 h3.5 M806.5 494 v4.5" stroke="#fff" stroke-width="0.7"/><path d="M818.5 495.5 h1.5 l2 -2 v7.5 l-2 -2 h-1.5z" fill="none" stroke="#fff" stroke-width="0.6"/><path d="M823.2 495 q1 1.8 0 3.6 M824.8 494 q1.8 2.8 0 5.6" stroke="#fff" stroke-width="0.6" fill="none"/><text x="830.5" y="500.3" textLength="10.5" lengthAdjust="spacingAndGlyphs" font-size="5.8" fill="#fff" font-weight="normal" >РУС</text><text x="853" y="494.6" textLength="13" lengthAdjust="spacingAndGlyphs" font-size="5.6" fill="#fff" font-weight="normal" >18:54</text><text x="847" y="503.2" textLength="25" lengthAdjust="spacingAndGlyphs" font-size="5.6" fill="#fff" font-weight="normal" >30.10.2024</text><path d="M881 492.8 h9 v7 h-2.5 l-2 2 v-2 h-4.5z" fill="none" stroke="#fff" stroke-width="0.7"/><path d="M882.5 494.8 h6 M882.5 496.6 h6" stroke="#fff" stroke-width="0.5"/><circle cx="889.2" cy="500.3" r="3.3" fill="#1f2a31" stroke="#fff" stroke-width="0.5"/><text x="886.7" y="502.3" textLength="5" lengthAdjust="spacingAndGlyphs" font-size="4.6" fill="#fff" font-weight="normal" >21</text><rect x="897.5" y="487" width="0.6" height="19" fill="#6a7a84" /><path d="M869.3 438.8 V447.2 H877 M869.3 447.2 L866.3 445.3" stroke="#e4e4f4" stroke-width="0.6" fill="none"/><text x="869.2" y="438.4" textLength="3" lengthAdjust="spacingAndGlyphs" font-size="4.5" fill="#e8e8f8" font-weight="normal" >z</text><text x="876.6" y="448" textLength="3" lengthAdjust="spacingAndGlyphs" font-size="4.5" fill="#e8e8f8" font-weight="normal" >x</text><text x="864.6" y="446.6" textLength="3" lengthAdjust="spacingAndGlyphs" font-size="4.5" fill="#e8e8f8" font-weight="normal" >y</text><path d="M882.3 459.5 Q885 458 886.3 459.5 Q886.8 461 885 462.6" stroke="#e05050" stroke-width="1.1" fill="none"/><path d="M885 462.5 Q888.5 464 888.6 466.5 Q888.5 468.5 884.8 468.8" stroke="#e8c870" stroke-width="1.2" fill="none"/><path d="M880.6 464.6 Q884 464 883.6 466.5 Q883 469.5 878.8 469.8 Z" fill="none" stroke="#4040a8" stroke-width="1.1"/><text x="881" y="472.8" textLength="15" lengthAdjust="spacingAndGlyphs" font-size="4.2" fill="#3838a0" font-weight="bold" >CATIA</text><path d="M884.5 41.3 H893" stroke="#fafafa" stroke-width="0.7"/><path d="M884.5 40.8 H893" stroke="#b8b8cc" stroke-width="0.35"/><rect x="888.5" y="47.5" width="6.5" height="7" fill="#e8e8f0" stroke="#c8c8d4" stroke-width="0.6"/><path d="M890 49.5 h4 M890 51.5 h4" stroke="#c8c8d4" stroke-width="0.5"/><rect x="888.5" y="60" width="7" height="7.5" fill="#e8e8f0" stroke="#c8c8d4" stroke-width="0.6"/><path d="M889.5 61 l5 5" stroke="#c8c8d4" stroke-width="0.7"/><path d="M884.5 75 H893" stroke="#fafafa" stroke-width="0.7"/><path d="M884.5 74.5 H893" stroke="#b8b8cc" stroke-width="0.35"/><path d="M887.8 88 l3 -5.5 l2 2.5 l1.5 -1.5 l2.2 4.5z" fill="#f0b090" stroke="#804020" stroke-width="0.5"/><circle cx="891.5" cy="86.3" r="0.8" fill="#c02020"/><circle cx="894.3" cy="86.8" r="0.7" fill="#c02020"/><path d="M896.5 89.80000000000001 h2 l-1 1.2z" fill="#000"/><path d="M888.5 102 l6 -5" stroke="#d4d4e0" stroke-width="0.7"/><path d="M896.5 104.0 h2 l-1 1.2z" fill="#000"/><path d="M886.5 115.8 h7.5 l-1 -3 l-2.5 -2.5 l-2.5 1.5z" fill="#c4c4c8"/><path d="M887.5 111 l5 -2.5" stroke="#c4c4c8" stroke-width="0.8"/><path d="M887 120 l4.5 5" stroke="#c4c4cc" stroke-width="0.8"/><rect x="891.8" y="121.5" width="3.5" height="6.5" fill="#c8c8cc"/><path d="M886.5 128.5 h4.5" stroke="#c4c4cc" stroke-width="0.6"/><path d="M888 139 l5 -7" stroke="#d0d0dc" stroke-width="0.8"/><path d="M884.5 145.3 H893" stroke="#fafafa" stroke-width="0.7"/><path d="M884.5 144.8 H893" stroke="#b8b8cc" stroke-width="0.35"/><path d="M889 152.5 l0 8.3 l2.2 -2 l2 3 l1.3 -0.7 l-1.8 -2.8 h3z" fill="#f8b060" stroke="#e07020" stroke-width="0.5"/><path d="M896.5 160.8 h2 l-1 1.2z" fill="#000"/><path d="M884.5 167.3 H893" stroke="#fafafa" stroke-width="0.7"/><path d="M884.5 166.8 H893" stroke="#b8b8cc" stroke-width="0.35"/><circle cx="890.6" cy="177" r="3.3" fill="#e8e8e8" stroke="#404040" stroke-width="0.6"/><path d="M891.5 173 l4.3 3.5 l-2 0.3 l1 2.5" fill="#f0f060" stroke="#606020" stroke-width="0.4"/><path d="M896.5 183.3 h2 l-1 1.2z" fill="#000"/><path d="M884.5 244.7 H893" stroke="#fafafa" stroke-width="0.7"/><path d="M884.5 244.2 H893" stroke="#b8b8cc" stroke-width="0.35"/><rect x="887" y="250" width="6.5" height="6" fill="#a0a8b0" stroke="#404050" stroke-width="0.5"/><rect x="890.5" y="253" width="5.8" height="5.8" fill="#6070e0" stroke="#3030a0" stroke-width="0.4"/><circle cx="890.5" cy="255" r="1.6" fill="#202020"/><path d="M887.5 264 l8 8 M887.5 268 l4 4 M890.5 264 l5 5" stroke="#c8c8d0" stroke-width="0.7"/><ellipse cx="889.6" cy="282.5" rx="2.3" ry="1.8" fill="none" stroke="#c8c8d0" stroke-width="0.8"/><ellipse cx="894" cy="282.5" rx="2.3" ry="1.8" fill="none" stroke="#c8c8d0" stroke-width="0.8"/><circle cx="891.5" cy="292.5" r="3.4" fill="#f0f020" stroke="#606010" stroke-width="0.5"/><rect x="890.3" y="295.5" width="2.4" height="3" fill="#404040"/><circle cx="891.5" cy="306.5" r="3" fill="#f0f0f0" stroke="#606060" stroke-width="0.4"/><rect x="890.3" y="309" width="2.4" height="3" fill="#303030"/><path d="M887.2 302.8 l8.6 9.5 M895.8 302.8 l-8.6 9.5" stroke="#e02020" stroke-width="0.9"/><path d="M884.5 319.7 H893" stroke="#fafafa" stroke-width="0.7"/><path d="M884.5 319.2 H893" stroke="#b8b8cc" stroke-width="0.35"/><circle cx="889.5" cy="326.8" r="2" fill="#d0c040" stroke="#505020" stroke-width="0.5"/><circle cx="893" cy="330.3" r="2.7" fill="#e8a020" stroke="#603010" stroke-width="0.6"/><circle cx="893" cy="330.3" r="0.9" fill="#603010"/><rect x="888.5" y="338.2" width="7" height="8.5" fill="#e0f8f8" stroke="#2090a0" stroke-width="0.5"/><circle cx="889.5" cy="340.5" r="2" fill="#d0c040" stroke="#505020" stroke-width="0.5"/><circle cx="893" cy="344.0" r="2.7" fill="#e8a020" stroke="#603010" stroke-width="0.6"/><circle cx="893" cy="344.0" r="0.9" fill="#603010"/><rect x="888.5" y="351.4" width="7" height="8.5" fill="#e0f8f8" stroke="#2090a0" stroke-width="0.5"/><circle cx="889.5" cy="353.7" r="2" fill="#d0c040" stroke="#505020" stroke-width="0.5"/><circle cx="893" cy="357.2" r="2.7" fill="#e8a020" stroke="#603010" stroke-width="0.6"/><circle cx="893" cy="357.2" r="0.9" fill="#603010"/><rect x="887.5" y="364" width="7.5" height="9" fill="#e8f8f8" stroke="#2090a0" stroke-width="0.5"/><path d="M889 370 h4.5" stroke="#208020" stroke-width="1.1"/><path d="M895.5 370 l-2.2 -1.8 v3.6z" fill="#30a030"/><circle cx="891.5" cy="366.5" r="1" fill="#30a030"/><rect x="887.5" y="377.5" width="3.5" height="3" fill="#303040"/><rect x="891" y="380" width="4" height="2" fill="#e0a040"/><path d="M887 384.5 h8.5" stroke="#2060e0" stroke-width="1.3"/><path d="M886.5 384.5 l1.8 -1.3 v2.6z" fill="#2060e0"/><rect x="887" y="391.5" width="6" height="7.5" fill="#60c0a0" stroke="#304040" stroke-width="0.5"/><path d="M887 394 h6 M887 396.5 h6" stroke="#304040" stroke-width="0.4"/><path d="M893 395 h3 l-1 -1.5 M896 395 l-1 1.5" stroke="#e02020" stroke-width="0.8" fill="none"/><rect x="887" y="403.5" width="5" height="2.5" fill="#303040"/><rect x="889" y="406" width="7" height="6.5" fill="#f0c020" stroke="#806010" stroke-width="0.4"/><rect x="890.5" y="407.5" width="4" height="3.5" fill="#40b040"/><rect x="887" y="417" width="5" height="2.5" fill="#505060"/><rect x="889" y="419.5" width="7" height="7" fill="#f0f0f4" stroke="#808090" stroke-width="0.5"/><path d="M890.5 421.5 h4 M890.5 423.5 h4" stroke="#a0a0b0" stroke-width="0.4"/><rect x="887" y="430.5" width="9" height="8.5" fill="#202028"/><rect x="888" y="431.5" width="3" height="3" fill="#e8e8e8"/><rect x="892" y="435" width="3" height="3" fill="#e8e8e8"/><path d="M889 438 l5 -5" stroke="#e8e8e8" stroke-width="0.6"/><rect x="887" y="443" width="5" height="2.5" fill="#408060"/><rect x="889" y="445" width="7" height="7" fill="#e8c020" stroke="#806010" stroke-width="0.4"/><circle cx="892.5" cy="448.5" r="2.2" fill="#30a030"/></svg></body></html>
